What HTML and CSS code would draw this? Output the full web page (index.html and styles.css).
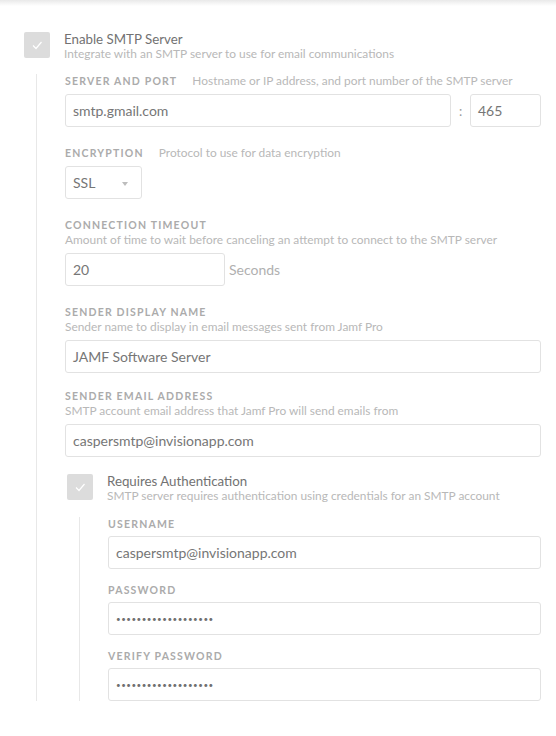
FILE: index.html
```html
<!DOCTYPE html>
<html>
<head>
<meta charset="utf-8">
<link rel="stylesheet" href="styles.css">
</head>
<body>
<div class="topshade"></div>
<main class="page">
  <div class="check-row">
    <span class="checkbox"><svg viewBox="0 0 26 26" width="26" height="26"><path d="M9 13.5l3 3 5.5-6.5" fill="none" stroke="#fff" stroke-width="1.2"/></svg></span>
    <div class="check-text">
      <div class="check-title">Enable SMTP Server</div>
      <div class="check-desc">Integrate with an SMTP server to use for email communications</div>
    </div>
  </div>
  <section class="nested">
    <div class="field first">
      <div class="label">SERVER AND PORT<span class="hint">Hostname or IP address, and port number of the SMTP server</span></div>
      <div class="host-row">
        <div class="input grow">smtp.gmail.com</div>
        <span class="colon">:</span>
        <div class="input port">465</div>
      </div>
    </div>
    <div class="field">
      <div class="label">ENCRYPTION<span class="hint">Protocol to use for data encryption</span></div>
      <div class="input select">SSL<span class="caret"></span></div>
    </div>
    <div class="field">
      <div class="label">CONNECTION TIMEOUT</div>
      <div class="desc">Amount of time to wait before canceling an attempt to connect to the SMTP server</div>
      <div class="timeout-row">
        <div class="input timeout">20</div>
        <span class="unit">Seconds</span>
      </div>
    </div>
    <div class="field">
      <div class="label">SENDER DISPLAY NAME</div>
      <div class="desc">Sender name to display in email messages sent from Jamf Pro</div>
      <div class="input">JAMF Software Server</div>
    </div>
    <div class="field tight">
      <div class="label">SENDER EMAIL ADDRESS</div>
      <div class="desc">SMTP account email address that Jamf Pro will send emails from</div>
      <div class="input">caspersmtp@invisionapp.com</div>
    </div>
    <div class="check-row inner-check">
      <span class="checkbox"><svg viewBox="0 0 26 26" width="26" height="26"><path d="M9 13.5l3 3 5.5-6.5" fill="none" stroke="#fff" stroke-width="1.2"/></svg></span>
      <div class="check-text">
        <div class="check-title">Requires Authentication</div>
        <div class="check-desc">SMTP server requires authentication using credentials for an SMTP account</div>
      </div>
    </div>
    <section class="nested inner">
      <div class="field first">
        <div class="label">USERNAME</div>
        <div class="input">caspersmtp@invisionapp.com</div>
      </div>
      <div class="field tight">
        <div class="label">PASSWORD</div>
        <div class="input dots">•••••••••••••••••••</div>
      </div>
      <div class="field tight">
        <div class="label">VERIFY PASSWORD</div>
        <div class="input dots">•••••••••••••••••••</div>
      </div>
    </section>
  </section>
</main>
</body>
</html>
```
FILE: styles.css
```css
html, body {
  margin: 0;
  padding: 0;
  background: #fff;
}
body {
  font-family: Lato, "Open Sans", sans-serif;
  color: #6e6e6e;
  width: 556px;
  height: 736px;
  overflow: hidden;
}
.topshade {
  height: 6px;
  background: linear-gradient(#e9e9e9, #ffffff);
}
.page {
  padding: 25px 15px 0 24px;
}
.check-row {
  display: flex;
  align-items: flex-start;
  gap: 14px;
}
.checkbox {
  flex: none;
  width: 26px;
  height: 26px;
  margin-top: 1px;
  background: #dcdcdc;
  border-radius: 2px;
  display: block;
}
.checkbox svg { display: block; }
.check-title {
  font-size: 13.3px;
  line-height: 16px;
  color: #727272;
}
.check-desc {
  font-size: 11.9px;
  line-height: 14px;
  color: #b8b8b8;
}
.nested {
  margin-top: 13px;
  margin-left: 12px;
  border-left: 1px solid #e8e8e8;
  padding-left: 28px;
}
.field { margin-top: 19px; }
.field.first { margin-top: 0; }
.field.tight { margin-top: 16px; }
.label {
  font-size: 10.5px;
  line-height: 14px;
  font-weight: 700;
  letter-spacing: 1.2px;
  color: #ababab;
  white-space: nowrap;
}
.hint {
  font-weight: 400;
  letter-spacing: 0;
  font-size: 11.9px;
  color: #b8b8b8;
  margin-left: 15px;
}
.desc {
  margin-top: 1px;
  font-size: 11.9px;
  line-height: 14px;
  color: #b8b8b8;
  white-space: nowrap;
}
.input {
  margin-top: 6px;
  box-sizing: border-box;
  height: 33px;
  border: 1px solid #e2e2e2;
  border-radius: 3px;
  padding: 0 7px;
  display: flex;
  align-items: center;
  font-size: 14px;
  color: #767676;
  background: #fff;
}
.host-row {
  display: flex;
  align-items: center;
  margin-top: 6px;
}
.host-row .input { margin-top: 0; }
.grow { flex: 1; }
.colon {
  width: 19px;
  text-align: center;
  font-size: 13px;
  color: #9a9a9a;
}
.port { width: 71px; flex: none; }
.select {
  width: 77px;
  position: relative;
}
.caret {
  position: absolute;
  left: 56px;
  top: 15px;
  width: 0;
  height: 0;
  border-left: 3.5px solid transparent;
  border-right: 3.5px solid transparent;
  border-top: 4px solid #bdbdbd;
}
.timeout-row {
  display: flex;
  align-items: center;
  gap: 4px;
  margin-top: 6px;
}
.timeout-row .input { margin-top: 0; }
.timeout { width: 160px; }
.unit {
  font-size: 14px;
  color: #b0b0b0;
}
.inner-check {
  margin-top: 16px;
  padding-left: 2px;
}
.nested.inner {
  margin-left: 14px;
  margin-top: 14px;
}
.inner .input { margin-top: 5px; }
.inner .field.tight { margin-top: 14px; }
.dots {
  font-size: 8px;
  letter-spacing: 0.5px;
  color: #707070;
}
```
